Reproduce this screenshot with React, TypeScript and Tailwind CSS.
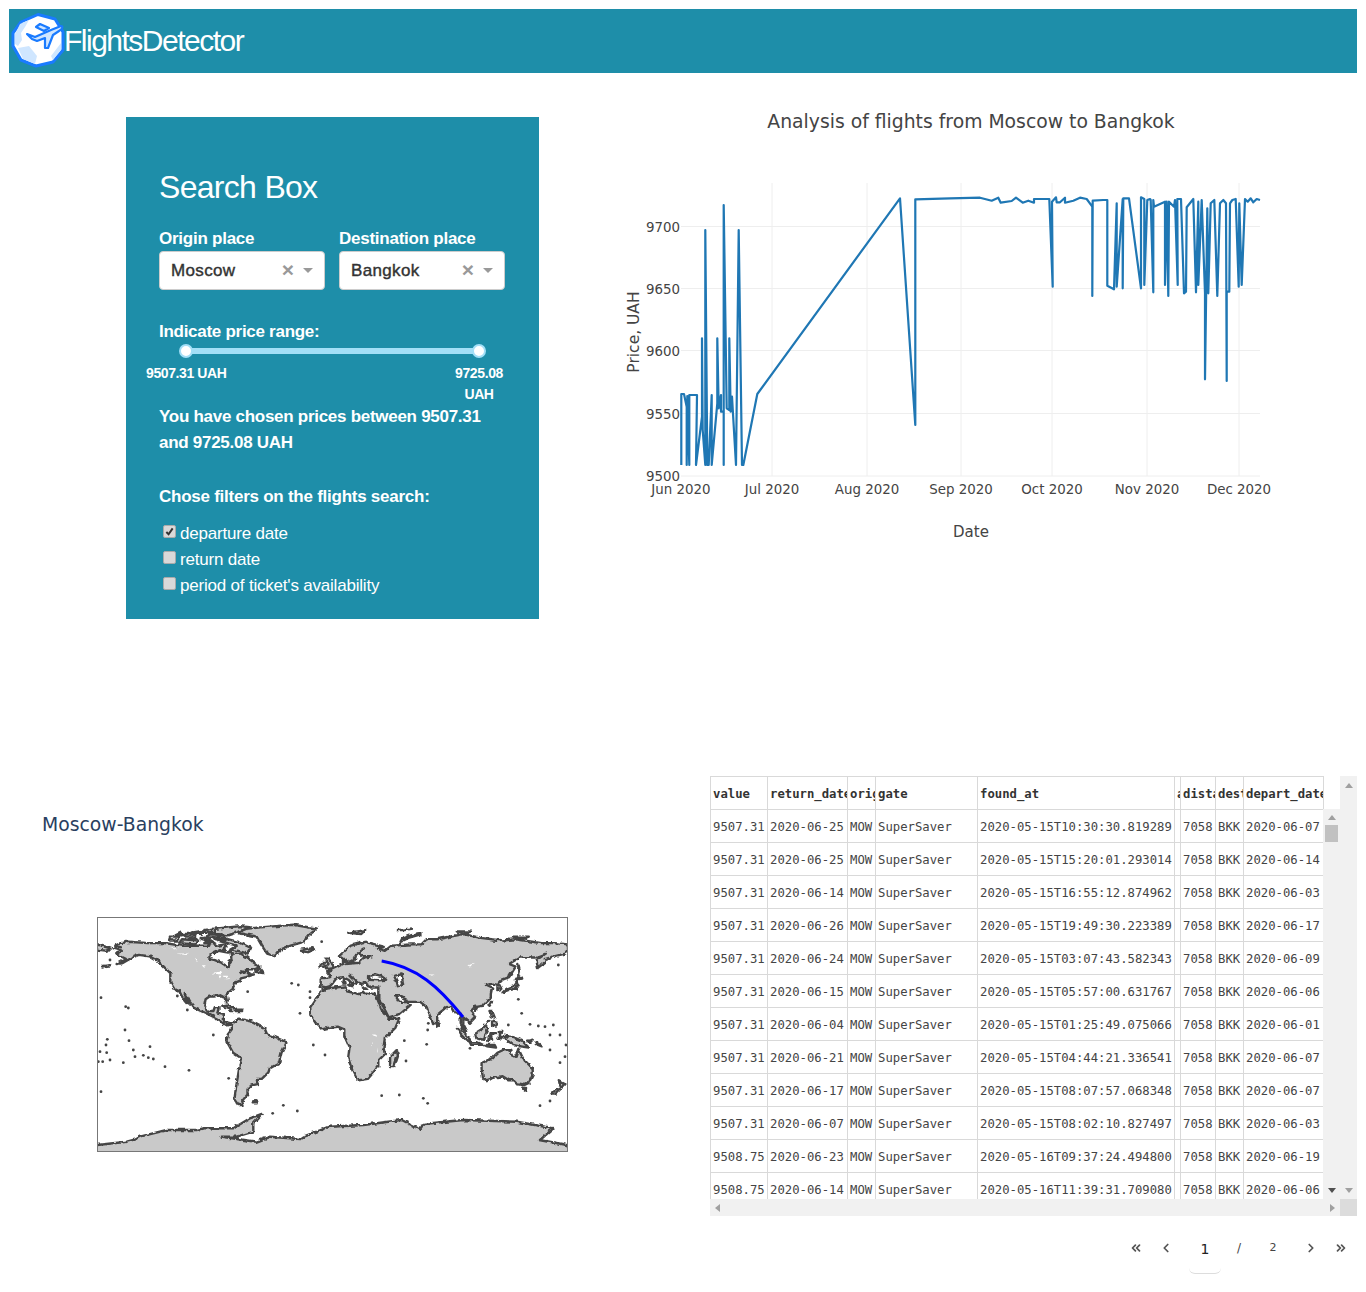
import React from "react";
import { ChevronLeft, ChevronRight, ChevronsLeft, ChevronsRight } from "lucide-react";

const TEAL = "bg-[#1e8ea9]";

/* ---------- chart data (reference zoom coordinates) ---------- */
const traceA: number[] = [184,885,184,672,192,672,200,710,200,885,202,678,208,885,208,675,231,675,228,885,246,740,246,505,248,780,256,885,256,180,262,885,266,885,275,675,275,885,292,700,292,505,296,715,303,675,303,725,311,725,311,885,311,105,320,715,328,720,328,505,332,725,336,680,348,885,356,180,366,885,370,885,412,672,840,85,886,765,886,88,990,85];
const traceB: number[] = [0,85,90,83,125,92,145,83,152,98,185,93,198,83,218,98,235,92,252,98,252,87,298,87,308,350,306,95,318,82,320,97,330,97,345,83,345,98,370,92,390,83,410,87,427,110,427,378,428,92,460,90,472,90,472,347,492,358,500,100,500,350,518,87,518,355,520,85,537,85,573,355,573,82,583,87,583,345,592,90,600,87,602,90,610,367,610,90,612,110,645,95,645,345,650,95,655,378,657,95,672,110,675,90,683,345,682,87,693,87,702,370,708,365,710,112,730,87,738,367,745,95,745,345,755,90,765,370,765,628,772,115,775,370,782,100,793,90,802,378,810,100,820,90,828,100,830,633,830,365,838,365,840,100,847,90,857,87,866,350,868,100,875,345,885,87,893,95,902,85,910,97,920,87,930,90];

const tracePts = () => {
  const out: string[] = [];
  for (let i = 0; i < traceA.length; i += 2) out.push(`${(620 + traceA[i] / 3).toFixed(1)},${(170 + traceA[i + 1] / 3).toFixed(1)}`);
  for (let i = 0; i < traceB.length; i += 2) out.push(`${(950 + traceB[i] / 3).toFixed(1)},${(170 + traceB[i + 1] / 3).toFixed(1)}`);
  return out.join(" ");
};

const xTicks: [number, string][] = [[681,"Jun 2020"],[772,"Jul 2020"],[867,"Aug 2020"],[961,"Sep 2020"],[1052,"Oct 2020"],[1147,"Nov 2020"],[1239,"Dec 2020"]];
const yTicks: [number, string][] = [[476,"9500"],[413.5,"9550"],[350.5,"9600"],[288.5,"9650"],[226.5,"9700"]];

function Chart() {
  return (
    <svg width={690} height={450} viewBox="620 100 690 450" className="block">
      <g fontFamily="'DejaVu Sans', sans-serif" fill="#444">
        <text x={971} y={128} textAnchor="middle" fontSize={18.8}>Analysis of flights from Moscow to Bangkok</text>
        {xTicks.map(([x, t]) => (
          <g key={t}>
            {x !== 681 && <line x1={x} x2={x} y1={183} y2={476} stroke="#eee" />}
            <text x={x} y={494} textAnchor="middle" fontSize={13.4}>{t}</text>
          </g>
        ))}
        {yTicks.map(([y, t]) => (
          <g key={t}>
            <line x1={681} x2={1260} y1={y} y2={y} stroke="#eee" />
            <text x={680} y={y + 5} textAnchor="end" fontSize={13.4}>{t}</text>
          </g>
        ))}
        <text x={971} y={537} textAnchor="middle" fontSize={15}>Date</text>
        <text transform="translate(639,332) rotate(-90)" textAnchor="middle" fontSize={15.5}>Price, UAH</text>
      </g>
      <polyline points={tracePts()} fill="none" stroke="#1f77b4" strokeWidth={2.2} strokeLinejoin="round" />
    </svg>
  );
}

/* ---------- map (lon/lat rings) ---------- */
const land: number[][] = [
  // North America
  [-168,66,-162,67,-166,68,-162,70,-156,71,-141,70,-128,70,-115,68,-108,68,-95,68,-94,72,-88,68,-82,69,-81,67,-87,64,-94,61,-94,58,-90,57,-85,55,-82,53,-80,51,-79,52,-79,55,-77,57,-78,62,-70,62,-65,59,-60,55,-56,52,-60,50,-66,50,-70,47,-65,49,-64,46,-60,46,-66,44,-70,43,-71,41,-74,40,-76,37,-76,35,-81,31,-80,26,-81,25,-83,29,-85,30,-90,29,-94,29,-97,27,-98,22,-95,18,-91,18,-90,21,-87,21,-88,16,-83,15,-83,10,-79,9,-77,8,-80,7,-83,8,-86,11,-92,14,-96,16,-105,20,-109,25,-113,31,-110,23,-115,29,-117,33,-121,35,-124,40,-124,47,-128,51,-133,56,-140,60,-148,61,-153,59,-160,55,-165,54,-158,58,-162,60,-165,62,-161,64],
  // Arctic Canada
  [-80,73,-72,71,-62,66,-65,62,-72,64,-78,65,-73,68,-88,72],
  [-117,70,-105,69,-102,72,-115,73],
  [-90,77,-80,76,-62,82,-70,83,-90,81],
  [-125,72,-118,72,-118,75,-124,75],
  [-96,75,-82,74,-82,76,-95,77],
  [-112,75,-105,75,-105,77,-115,77],
  [-100,73,-95,72,-93,74,-100,74],
  [-100,78,-92,78,-92,81,-98,80],
  [-120,76,-115,76,-116,78],
  [-108,78,-100,77,-102,79],
  [-90,73,-82,72,-84,74],
  [-110,73,-103,73,-105,74],
  [-98,70,-92,70,-95,72],
  [-87,64,-81,63,-84,65],
  [-80,63,-76,62,-78,64],
  [-59,48,-53,47,-56,51],
  // Greenland, Iceland
  [-73,78,-66,81,-55,82,-30,84,-12,81,-18,76,-22,71,-32,68,-40,65,-44,60,-50,62,-54,68,-58,75],
  [-24,65,-15,66,-14,65,-19,63,-24,64],
  // Caribbean
  [-85,22,-80,23,-74,20,-78,20],
  [-74,19,-69,19,-69,18,-74,18],
  [-78,18.4,-76.5,18,-78,18],
  // Aleutians, Chukotka wrap
  [-180,65,-172,64,-170,66,-180,69],
  [-176,52,-170,53,-175,52.5],
  // South America
  [-77,8,-72,12,-62,10,-52,5,-50,0,-44,-2,-35,-6,-39,-14,-41,-22,-48,-26,-49,-29,-54,-34,-58,-34,-57,-38,-62,-39,-65,-42,-65,-46,-69,-51,-68,-54,-72,-54,-75,-50,-74,-42,-72,-30,-70,-18,-76,-14,-81,-5,-80,0,-77,4],
  // Africa
  [-6,35,10,37,11,33,20,31,25,32,32,31,34,28,37,20,43,12,51,12,48,5,40,-3,39,-10,40,-15,35,-20,35,-24,32,-28,27,-34,20,-35,18,-33,15,-27,12,-18,13,-10,9,-1,9,4,4,6,-4,5,-8,4,-13,9,-17,15,-17,21,-13,27,-10,31],
  // Eurasia
  [-9,37,-9,43,-1,44,-4,48,2,51,8,54,8,57,11,56,10,54,20,55,24,59,30,60,22,60,21,64,24,66,18,61,17,57,13,55,8,58,5,60,14,68,25,71,40,67,34,66,40,64,45,68,60,69,68,69,72,73,80,73,100,77,113,74,130,72,140,73,160,70,170,70,180,69,180,65,178,62,170,60,163,58,162,55,157,51,156,57,163,62,155,59,143,59,135,54,140,52,135,44,130,42,127,39,129,35,126,34,126,38,122,39,118,38,122,36,121,31,121,28,115,22,108,21,106,19,109,13,105,9,100,13,100,8,103,2,101,3,98,8,98,16,94,16,91,22,87,21,80,15,80,10,77,8,73,18,72,21,67,25,57,25,56,27,50,30,48,30,51,25,56,25,59,22,52,16,43,13,39,21,35,28,35,36,30,36,27,37,26,40,23,40,23,37,20,40,13,45,18,40,16,38,12,42,8,44,3,43,0,39,-2,37,-5,36],
  // Europe / Asia islands
  [12,78,25,80,22,77],
  [52,71,58,74,68,77,60,76,53,73],
  [95,79,105,79,100,77],
  [138,75,150,75,145,73],
  [50,80,60,81,55,80],
  [-5,50,1,51,0,54,-3,58,-6,58,-3,54,-5,52],
  [-10,52,-6,52,-6,55,-9,54],
  [8,39,10,39,9,43],
  [12,38,15,38,15,37],
  [24,35,26,35,25,35.4],
  [130,32,135,34,140,35,142,39,141,41,138,37,133,35],
  [140,42,145,43,142,45],
  [142,46,143,50,142,54],
  [120,22,122,25,121,25],
  [109,18,111,20,110,20],
  [120,18,122,18,124,13,121,14],
  [122,10,126,9,125,6,122,7],
  [118,9,120,11,119,10],
  [109,1,114,4,117,7,119,5,117,1,116,-4,110,-3],
  [95,5,98,4,104,-2,106,-6,102,-4,98,0],
  [105,-6,111,-6,115,-8,106,-8],
  [119,-5,120,1,125,1,121,0,122,-4,120,-3],
  [116,-8,124,-8,125,-10,118,-9],
  [126,-3,130,-3,128,-1],
  [127,2,128,0,129,2],
  [131,-1,138,-2,145,-5,150,-10,143,-9,138,-8,133,-4],
  [149,-5,153,-4,151,-6],
  [155,-6,160,-9,157,-8],
  [80,9,82,7,80,6],
  [49,-12,50,-16,47,-25,44,-25,44,-17],
  // Oceania
  [114,-22,122,-18,126,-14,130,-12,136,-12,136,-15,140,-17,142,-11,146,-19,153,-26,153,-31,150,-37,146,-39,141,-38,138,-35,135,-35,130,-32,124,-33,118,-35,115,-34,114,-26],
  [145,-41,148,-41,147,-43],
  [173,-35,178,-38,175,-41,174,-39],
  [172,-41,174,-42,170,-46,167,-46],
  [-61,-52,-58,-52,-59,-51],
];
const seas: number[][] = [
  [28,42,28,45,33,46,37,45,41,42,35,41.5],
  [47,45,53,46,54,38,50,37,49,41],
];
const specks: number[][] = [
  [-92,47,-86,48,-85,46,-90,46.5],[-87,45,-85,45,-86,42],[-84,45,-80,45,-82,43],[-83,42,-78,43.5,-79,42.5],
  [-120,62,-110,62,-112,61],[-125,66,-118,66,-120,65],[-105,58,-102,56,-104,56],[-100,53,-97,53,-98,51],
  [30,0,33,0,33,-2],[30,-5,30,-9,29.5,-8],[34,-10,35,-13,34.5,-13],[74,46,78,46,76,45],[103,53,109,55,105,52],
];
const z6dots: number[][] = [[107,290],[115,294],[105,360],[117,392],[52,388],[48,405],[30,425],[50,428],[38,455],[60,450],[100,458],[130,420],[135,440],[160,436],[175,443],[190,447],[180,410],[225,470],[297,481],[416,505],[33,545],[370,375],[33,263],[262,258],[292,300],[473,245],[605,220],[625,225],[660,245],[660,263],[630,310],[670,405],[705,435],[580,586],[622,603],[548,610],[490,575],[695,95],[60,150],[25,455]];
const z7dots: number[][] = [[295,340],[293,360],[223,392],[290,403],[228,453],[155,557],[208,555],[280,565],[293,580],[630,587],[660,573],[565,268],[575,310],[535,345],[600,343],[625,348],[645,350],[670,345],[660,375],[690,375],[708,405],[660,420],[705,440],[690,458],[420,415],[685,165]];
const z6 = (x: number, y: number) => `${(90 + x / 3 - 97).toFixed(1)},${(910 + y / 3 - 917).toFixed(1)}`;
const z7 = (x: number, y: number) => `${(330 + x / 3 - 97).toFixed(1)},${(910 + y / 3 - 917).toFixed(1)}`;
const ring = (r: number[]) => {
  const o: string[] = [];
  for (let i = 0; i < r.length; i += 2) o.push(`${(((r[i] + 180) * 471) / 360).toFixed(1)},${(((90 - r[i + 1]) * 235) / 180).toFixed(1)}`);
  return o.join(" ");
};
const antarctica = [
  "-4,245", "-4,236", z6(22, 705), z6(110, 695), z6(130, 690), z6(150, 680), z6(230, 660), z6(320, 660), z6(340, 655), z6(430, 655), z6(480, 625), z6(515, 612), z6(490, 640), z6(490, 665), z6(440, 680), z6(395, 680), z6(500, 695), z6(540, 680), z6(630, 687), z6(640, 680), z6(720, 650),
  z7(100, 645), z7(215, 630), z7(270, 658), z7(280, 642), z7(400, 630), z7(560, 635), z7(670, 655), z7(630, 690), z7(712, 705), "478,245",
].join(" ");

function WorldMap() {
  return (
    <svg width={469} height={233} viewBox="1 1 469 233" className="block">
      <defs>
        <filter id="coast" x="-2%" y="-2%" width="104%" height="104%">
          <feTurbulence type="fractalNoise" baseFrequency="0.22" numOctaves={2} seed={4} />
          <feDisplacementMap in="SourceGraphic" scale={4} xChannelSelector="R" yChannelSelector="G" />
        </filter>
      </defs>
      <g filter="url(#coast)">
        <g fill="#c9c9c9" stroke="#444" strokeWidth={2.4} strokeLinejoin="round">
          {land.map((r, i) => <polygon key={i} points={ring(r)} />)}
          <polygon points={antarctica} />
        </g>
        <g fill="#fff" stroke="#444" strokeWidth={2.4} strokeLinejoin="round">
          {seas.map((r, i) => <polygon key={i} points={ring(r)} />)}
        </g>
        <g fill="#fff">
          {specks.map((r, i) => <polygon key={i} points={ring(r)} />)}
        </g>
      </g>
      <g fill="#444">
        {z6dots.map(([x, y], i) => <circle key={i} cx={90 + x / 3 - 97} cy={910 + y / 3 - 917} r={1.4} />)}
        {z7dots.map(([x, y], i) => <circle key={i} cx={330 + x / 3 - 97} cy={910 + y / 3 - 917} r={1.4} />)}
      </g>
      <path d="M284.7 44 C 320 50, 342 70, 366 100" fill="none" stroke="#0000ff" strokeWidth={3} />
    </svg>
  );
}

/* ---------- logo ---------- */
function Logo() {
  return (
    <svg width={54} height={56} viewBox="10 13 54 56" className="block shrink-0">
      <polygon points="20,22 37,14.5 54,19 62,32 62,50 52,62 35,66 20,60 12,46 12,33" fill="#fff" stroke="#1a7bff" strokeWidth={3} strokeLinejoin="round" />
      <path d="M19 24 L28 20 L24 27 L20 33 L21 40 L17 46 L14 44 L14 34 Z" fill="#cfe6ff" />
      <path d="M17 48 L28 46 L36 56 L34 64 L22 59 Z" fill="#cfe6ff" />
      <path d="M50 56 L60 43 L60 50 L52 60 Z" fill="#cfe6ff" />
      <path d="M26 34 L34 37 L50 30 L60 26 C62 26 62 29 58 31 L52 35 L47 48 L44 48 L44 38 L36 41 L31 39 Z" fill="#cfe6ff" stroke="#1a7bff" strokeWidth={2.2} strokeLinejoin="round" />
      <path d="M35 27 L39 24 L48 28 L43 31 Z" fill="#cfe6ff" stroke="#1a7bff" strokeWidth={2.2} strokeLinejoin="round" />
    </svg>
  );
}

/* ---------- search box parts ---------- */
function Select({ label, value }: { label: string; value: string }) {
  return (
    <div className="w-[166px]">
      <div className="text-[17px] font-bold leading-[25px] tracking-[-0.25px] text-white">{label}</div>
      <div className="flex h-[39px] items-center rounded-[4px] border border-[#ccc] bg-white pl-[11px] pr-[11px]">
        <span className="flex-1 text-[17px] leading-none tracking-[0.35px] text-[#333]" style={{ WebkitTextStroke: "0.4px #333" }}>{value}</span>
        <span className="mb-[2px] mr-[9px] text-[21px] font-bold leading-none text-[#999]">×</span>
        <span className="h-0 w-0 border-x-[5px] border-t-[5px] border-x-transparent border-t-[#999]" />
      </div>
    </div>
  );
}

function Check({ checked, label }: { checked?: boolean; label: string }) {
  return (
    <div className="flex h-[26px] items-center">
      <span className="ml-[4px] mt-[-6px] flex h-[13px] w-[13px] items-center justify-center rounded-[2px] border border-[#aaa] bg-[#d9d9d9]">
        {checked && (
          <svg width={9} height={9} viewBox="0 0 10 10"><path d="M1.5 5.5 L4 8 L8.5 1.5" fill="none" stroke="#333" strokeWidth={2.2} /></svg>
        )}
      </span>
      <span className="ml-[4px] text-[17px] leading-[26px] tracking-[-0.2px] text-white">{label}</span>
    </div>
  );
}

function SearchBox() {
  return (
    <div className={`${TEAL} ml-[117px] mt-[17px] h-[502px] w-[413px] shrink-0 px-[33px] pt-[50px]`}>
      <div className="text-[32px] leading-[40px] tracking-[-0.7px] text-white">Search Box</div>
      <div className="mt-[19px] flex gap-[14px]">
        <Select label="Origin place" value="Moscow" />
        <Select label="Destination place" value="Bangkok" />
      </div>
      <div className="mt-[29px] text-[17px] font-bold leading-[26px] tracking-[-0.28px] text-white">Indicate price range:</div>
      <div className="relative mx-[27px] mt-[3px] h-[6px] w-[293px] bg-[#a3dff7]">
        <span className="absolute left-[-7px] top-[-4px] h-[14px] w-[14px] rounded-full border-2 border-[#a3dff7] bg-white" />
        <span className="absolute right-[-7px] top-[-4px] h-[14px] w-[14px] rounded-full border-2 border-[#a3dff7] bg-white" />
      </div>
      <div className="ml-[-13px] mt-[9px] flex w-[358px] justify-between text-[14px] font-bold leading-[21px] tracking-[-0.4px] text-white">
        <span>9507.31 UAH</span>
        <span className="w-[50px] text-center">9725.08 UAH</span>
      </div>
      <div className="mt-[-1px] text-[17px] font-bold leading-[26px] tracking-[-0.28px] text-white">
        You have chosen prices between 9507.31<br />and 9725.08 UAH
      </div>
      <div className="mt-[28px] text-[17px] font-bold leading-[26px] tracking-[-0.25px] text-white">Chose filters on the flights search:</div>
      <div className="mt-[11px]">
        <Check checked label="departure date" />
        <Check label="return date" />
        <Check label="period of ticket's availability" />
      </div>
    </div>
  );
}

/* ---------- table ---------- */
const cols = [57, 80, 28, 102, 197, 6, 35, 28, 80];
const heads = ["value", "return_date", "origin", "gate", "found_at", "actual", "distance", "destination", "depart_date"];
const rows: [string, string, string, string][] = [
  ["9507.31","2020-06-25","2020-05-15T10:30:30.819289","2020-06-07"],
  ["9507.31","2020-06-25","2020-05-15T15:20:01.293014","2020-06-14"],
  ["9507.31","2020-06-14","2020-05-15T16:55:12.874962","2020-06-03"],
  ["9507.31","2020-06-26","2020-05-15T19:49:30.223389","2020-06-17"],
  ["9507.31","2020-06-24","2020-05-15T03:07:43.582343","2020-06-09"],
  ["9507.31","2020-06-15","2020-05-15T05:57:00.631767","2020-06-06"],
  ["9507.31","2020-06-04","2020-05-15T01:25:49.075066","2020-06-01"],
  ["9507.31","2020-06-21","2020-05-15T04:44:21.336541","2020-06-07"],
  ["9507.31","2020-06-17","2020-05-15T08:07:57.068348","2020-06-07"],
  ["9507.31","2020-06-07","2020-05-15T08:02:10.827497","2020-06-03"],
  ["9508.75","2020-06-23","2020-05-16T09:37:24.494800","2020-06-19"],
  ["9508.75","2020-06-14","2020-05-16T11:39:31.709080","2020-06-06"],
];
const cell = "h-[33px] overflow-hidden whitespace-nowrap border border-[#d9d9d9] pl-[2px] pr-[3px] pt-[2px] pb-0 text-left align-middle";

function Colgroup() {
  return <colgroup>{cols.map((w, i) => <col key={i} style={{ width: w }} />)}</colgroup>;
}

const Up = ({ c = "#a0a0a0" }: { c?: string }) => <span className="block h-0 w-0 border-x-[4px] border-b-[5px] border-x-transparent" style={{ borderBottomColor: c }} />;
const Down = ({ c = "#a0a0a0" }: { c?: string }) => <span className="block h-0 w-0 border-x-[4px] border-t-[5px] border-x-transparent" style={{ borderTopColor: c }} />;

function DataTable() {
  return (
    <div className="w-[647px] font-['DejaVu_Sans_Mono',monospace] text-[12.25px] leading-none text-[#444]">
      <div className="flex h-[423px]">
        <div className="w-[630px]">
          <div className="h-[33px]">
            <table className="w-[613px] table-fixed border-collapse">
              <Colgroup />
              <thead>
                <tr>{heads.map((h) => <th key={h} className={`${cell} font-semibold text-[#333]`}>{h}</th>)}</tr>
              </thead>
            </table>
          </div>
          <div className="flex h-[390px]">
            <div className="w-[613px] overflow-hidden">
              <table className="w-[613px] table-fixed border-collapse">
                <Colgroup />
                <tbody>
                  {rows.map((r) => (
                    <tr key={r[2]}>
                      <td className={cell}>{r[0]}</td>
                      <td className={cell}>{r[1]}</td>
                      <td className={cell}>MOW</td>
                      <td className={cell}>SuperSaver</td>
                      <td className={cell}>{r[2]}</td>
                      <td className={cell}></td>
                      <td className={cell}>7058</td>
                      <td className={cell}>BKK</td>
                      <td className={cell}>{r[3]}</td>
                    </tr>
                  ))}
                </tbody>
              </table>
            </div>
            <div className="flex w-[17px] flex-col items-center bg-[#f1f1f1]">
              <div className="mt-[6px]"><Up /></div>
              <div className="mt-[5px] h-[17px] w-[13px] bg-[#c1c1c1]" />
              <div className="mb-[6px] mt-auto"><Down c="#505050" /></div>
            </div>
          </div>
        </div>
        <div className="flex w-[17px] flex-col items-center bg-[#f1f1f1]">
          <div className="mt-[7px]"><Up /></div>
          <div className="mb-[6px] mt-auto"><Down /></div>
        </div>
      </div>
      <div className="flex h-[17px]">
        <div className="flex w-[630px] items-center justify-between bg-[#f1f1f1] px-[5px]">
          <span className="h-0 w-0 border-y-[4px] border-r-[5px] border-y-transparent border-r-[#a0a0a0]" />
          <span className="h-0 w-0 border-y-[4px] border-l-[5px] border-y-transparent border-l-[#a0a0a0]" />
        </div>
        <div className="w-[17px] bg-[#dcdcdc]" />
      </div>
    </div>
  );
}

function Pager() {
  const ic = "shrink-0 text-[#555]";
  return (
    <div className="ml-[421px] mt-[20px] flex h-[24px] w-[226px] items-center font-['DejaVu_Sans',sans-serif] text-[12px] text-[#444]">
      <span className="flex w-[10px] justify-center"><ChevronsLeft size={14} strokeWidth={3} className={ic} /></span>
      <span className="ml-[20px] flex w-[10px] justify-center"><ChevronLeft size={14} strokeWidth={3} className={ic} /></span>
      <span className="ml-[18px] mt-[16px] flex h-[36px] w-[32px] items-start justify-center rounded-b-[6px] border-b border-[#ddd] pt-[3px] text-[14px] leading-[16px] text-[#222]">1</span>
      <span className="ml-[13px] w-[10px] text-center">/</span>
      <span className="ml-[24px] w-[10px] text-center text-[11px]">2</span>
      <span className="ml-[28px] flex w-[10px] justify-center"><ChevronRight size={14} strokeWidth={3} className={ic} /></span>
      <span className="ml-[20px] flex w-[10px] justify-center"><ChevronsRight size={14} strokeWidth={3} className={ic} /></span>
    </div>
  );
}

export default function App() {
  return (
    <div className="min-h-[1292px] bg-white px-[9px] pt-[9px] font-['Liberation_Sans',Arial,sans-serif]">
      <header className={`${TEAL} flex h-[64px] w-[1348px] items-center pl-[2px]`}>
        <Logo />
        <span className="ml-[-1px] text-[30px] leading-none tracking-[-1.5px] text-white">FlightsDetector</span>
      </header>

      <div className="mt-[27px] flex items-start">
        <SearchBox />
        <div className="ml-[81px]"><Chart /></div>
      </div>

      <div className="mt-[157px] flex items-start">
        <div className="w-[701px] shrink-0">
          <div className="ml-[33px] mt-[37px] font-['DejaVu_Sans',sans-serif] text-[18.8px] leading-[24px] text-[#2a3f5f]">Moscow-Bangkok</div>
          <div className="ml-[88px] mt-[80px] w-fit border border-[#777]"><WorldMap /></div>
        </div>
        <div>
          <DataTable />
          <Pager />
        </div>
      </div>
    </div>
  );
}
